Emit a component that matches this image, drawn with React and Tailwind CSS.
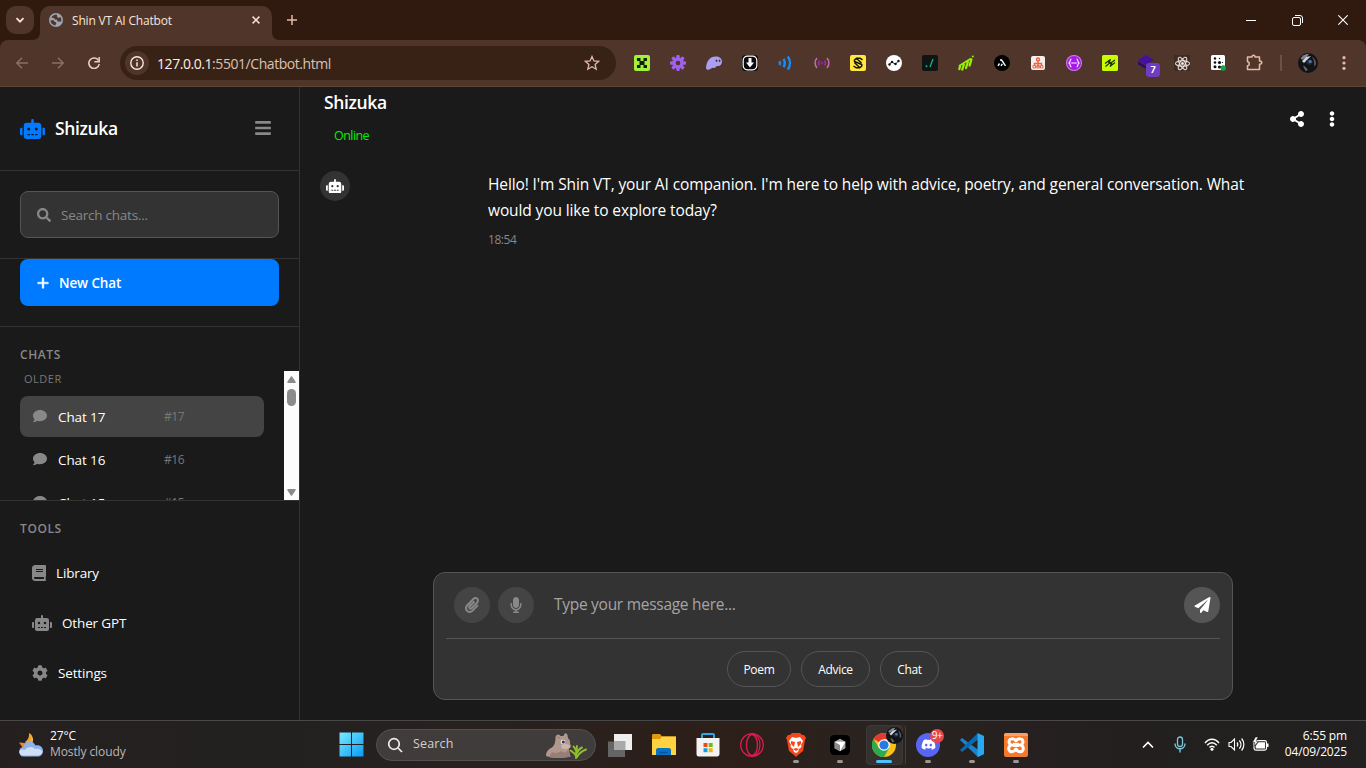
import React from "react";
import { FaPlus } from "react-icons/fa6";
import {
  FaReact, FaDiscord, FaRobot, FaBars, FaSearch, FaComment, FaBook, FaCog,
  FaPaperclip, FaMicrophone, FaPaperPlane, FaShareAlt, FaEllipsisV,
} from "react-icons/fa";

const S = ({ w = 24, h, vb = "0 0 24 24", className = "", children }) => (
  <svg width={w} height={h || w} viewBox={vb} fill="none" className={"shrink-0 " + className}>{children}</svg>
);

function TabStrip() {
  return (
    <div className="flex h-10 bg-[#301a10]">
      <div className="flex w-8 pl-1.5 pt-1.5">
        <div className="flex h-7 w-7 shrink-0 items-center justify-center rounded-[10px] bg-[#50362a]">
          <S w={10} vb="0 0 10 10"><path d="M1.5 3.2 5 6.7l3.5-3.5" stroke="#f6e3da" strokeWidth="1.8" /></S>
        </div>
      </div>
      <S w={8} vb="0 0 8 8" className="self-end"><path d="M8 0v8H0C5 8 8 5 8 0Z" fill="#50362a" /></S>
      <div className="flex h-[34px] w-[232px] items-center self-end rounded-t-[10px] bg-[#50362a] pb-[6px] pl-[9px] pr-[12px]">
        <S w={14} vb="0 0 14 14">
          <circle cx="7" cy="7" r="7" fill="#9aa5b1" />
          <path d="M7.600 1.600C5 1.800 3.200 2.800 2.400 4.600l2 .3c1.200.2 1 1.500 2.200 1.700 1.200.2 1.600-.1 1.700 1.100.1 1 1.200.8 2.300.8h1.600c.4-1.500.1-3.300-.9-4.500-.8.2-1.200.9-2.200.7C7.700 4.400 8.500 3 7.600 1.600Z" fill="#50362a" />
          <path d="M1.500 7.200c0 2.600 2 4.800 4.600 5.200.9-.3.400-1.500 1.100-2 .5-.5-.2-1.400-1-1.500-1.100-.1-.9-1.600-2-1.700Z" fill="#50362a" />
        </S>
        <span className="ml-[9px] mt-px flex-1 whitespace-nowrap text-[12px] tracking-[-0.18px] text-[#f6e3da]">Shin VT AI Chatbot</span>
        <S w={8} vb="0 0 8 8"><path d="m.6.6 6.800 6.800M7.400.6.6 7.400" stroke="#f6e3da" strokeWidth="1.500" /></S>
      </div>
      <S w={8} vb="0 0 8 8" className="self-end"><path d="M0 0v8h8C3 8 0 5 0 0Z" fill="#50362a" /></S>
      <div className="flex w-6 items-center justify-center">
        <S w={10} vb="0 0 10 10"><path d="M5 0v10M0 5h10" stroke="#e8b9a5" strokeWidth="1.500" /></S>
      </div>
      <div className="ml-auto flex items-center">
        <div className="flex w-[46px] justify-center"><div className="h-px w-2.5 bg-white" /></div>
        <div className="flex w-[46px] justify-center">
          <S w={11} vb="0 0 11 11" className="text-white">
            <rect x=".5" y="2.500" width="8" height="8" rx="1.500" stroke="currentColor" />
            <path d="M3 .5h5A2.500 2.500 0 0 1 10.500 3v5" stroke="currentColor" />
          </S>
        </div>
        <div className="flex w-[46px] justify-center">
          <S w={10} vb="0 0 10 10"><path d="m.3.3 9.400 9.400M9.700.3.3 9.700" stroke="#fff" strokeWidth="1.100" /></S>
        </div>
      </div>
    </div>
  );
}

const extensions = [
  <S w={16} vb="0 0 16 16"><rect width="16" height="16" rx="2" fill="#a3f03a" /><path d="M3 3h3.500v3H3zM9.500 3H13v3H9.500zM5.500 6h5v4h-5zM3 10h3.500v3H3zM9.500 10H13v3H9.500z" fill="#10200a" /></S>,
  <S w={16}><g fill="#a061ee">{[0, 45, 90, 135].map((a) => <rect key={a} x="9.500" y="0" width="5" height="24" rx="1.500" transform={`rotate(${a} 12 12)`} />)}<circle cx="12" cy="12" r="8.500" /></g><circle cx="12" cy="12" r="3.500" fill="#50362a" /></S>,
  <S w={16} vb="0 0 16 16"><path d="M0 13C.5 6 4 1.500 9.500 1.500c4 0 6.500 2 6.500 5 0 3-2 5-4.500 4.500-1.500 0-2 2.500-4 2-1.500-.5-2 .5-3.500 1.300C2.500 15 0 15 0 13Z" fill="#ab9ff2" /><ellipse cx="10.500" cy="5.800" rx=".9" ry="1.200" fill="#50362a" /><ellipse cx="13.600" cy="5.800" rx=".9" ry="1.200" fill="#50362a" /></S>,
  <S w={16} vb="0 0 16 16"><rect width="16" height="16" rx="3.500" fill="#0b0b0b" /><rect x="1.200" y="1.200" width="13.600" height="13.600" rx="4" stroke="#fff" strokeWidth="1.200" /><path d="M6.500 3h3v4.500H12l-4 5-4-5h2.500Z" fill="#fff" /></S>,
  <S w={16} vb="0 0 16 16"><path d="M1.500 6a4 4 0 0 1 0 4M5.500 3.800a8 8 0 0 1 0 8.400M9.800 1.500a11 11 0 0 1 0 13" stroke="#188af2" strokeWidth="2.500" /></S>,
  <S w={16} vb="0 0 16 16"><circle cx="8" cy="8" r="1.400" fill="#8d2294" /><path d="M5.500 5.500a4 4 0 0 0 0 5M10.500 5.500a4 4 0 0 1 0 5" stroke="#a129a7" strokeWidth="1.400" /><path d="M3 3a7.500 7.500 0 0 0 0 10M13 3a7.500 7.500 0 0 1 0 10" stroke="#c66bb3" strokeWidth="1.500" /></S>,
  <S w={16} vb="0 0 16 16"><rect width="16" height="16" rx="2" fill="#ffe93d" /><path d="M12.500 4.800 10 3.200H6.500L4.500 5v1.500l7.300 3V11l-2 1.800H6.200L3.500 11M6.500 3.500l5 4.500M4.500 7.500l5 5" stroke="#16130a" strokeWidth="1.500" /></S>,
  <S w={16} vb="0 0 16 16"><circle cx="8" cy="8" r="8" fill="#fff" /><path d="m3.500 9.500 2-2.500 4 2 3-3" stroke="#111" strokeWidth=".9" /><g fill="#111"><circle cx="3.500" cy="9.500" r="1.200" /><circle cx="6" cy="7" r="1.200" /><circle cx="9.500" cy="9" r="1.200" /><circle cx="12.500" cy="6" r="1.200" /></g></S>,
  <S w={16} vb="0 0 16 16"><rect width="16" height="16" rx="2" fill="#111413" /><circle cx="4.500" cy="11.300" r="1" fill="#10b981" /><path d="m8 12 3-8" stroke="#10b981" strokeWidth="1.300" /></S>,
  <S w={16} vb="0 0 16 16"><g stroke="#98ee0b" strokeLinecap="round" strokeWidth="2.300"><path d="m1.300 14 .7-2.500M4.300 14.500l1.500-5M8 13l1.800-6M11.600 10.500l1.800-6" /></g><path d="m1 11 12-7.500" stroke="#98ee0b" strokeWidth="1.800" /><circle cx="14.800" cy="1.400" r="1" fill="#98ee0b" /></S>,
  <S w={16} vb="0 0 16 16"><circle cx="8" cy="8" r="8" fill="#000" /><path d="m4 10.800 1.500-2.300M6 5h1.600l3.900 5.800M7 10.800l1.300-2" stroke="#fff" strokeWidth="1.400" /></S>,
  <S w={14} vb="0 0 14 14"><rect width="14" height="14" rx="2" fill="#f3efed" /><circle cx="7" cy="3.500" r="1.500" stroke="#ef6147" strokeWidth="1.500" /><path d="M7 5v6M3.500 10V7.500h7V10" stroke="#ef6147" strokeWidth="1.400" /><path d="M2 9.500h2.500V12H2zM5.800 9.500h2.500V12H5.800zM9.500 9.500H12V12H9.500z" stroke="#ef6147" /></S>,
  <S w={16} vb="0 0 16 16"><circle cx="8" cy="8" r="8" fill="#d77cf7" /><circle cx="8" cy="8" r="7" fill="#a51ae9" /><path d="M5.500 4C3.500 4 5 7 3 8c2 1 .5 4 2.500 4M10.500 4c2 0 .5 3 2.500 4-2 1-.5 4-2.500 4" stroke="#fff" strokeWidth="1.100" /><path d="M5.500 8h5" stroke="#fff" strokeWidth="1.400" strokeDasharray="1.200 .7" /></S>,
  <S w={16} vb="0 0 16 16"><rect width="16" height="16" rx="1.500" fill="#c6ff00" /><path d="m3 8.500 5.500-4-1.500 3h2.500l3.500-2.500M3.500 11.500 7 8.500h2.500L8 11.500 13 7.500" stroke="#222b05" strokeWidth="1.200" /></S>,
  <div className="relative h-4 w-4"><S w={16} vb="0 0 16 16"><path d="m8 0 8 5-8 5-8-5Z" fill="#4310a2" /><path d="m0 6 8 5v3L0 9.500Z" fill="#2b0c6e" /></S><span className="absolute left-2 top-2 flex h-[14px] w-[14px] items-center justify-center rounded-[3px] bg-[#6f3cc3] font-['Inter'] text-[9px] font-bold text-white">7</span></div>,
  <div className="flex h-4 w-4 items-center justify-center bg-[#3e2b22] text-[#f4ece8]"><FaReact size={15} stroke="currentColor" strokeWidth="14" /></div>,
  <S w={16} vb="0 0 16 16"><rect x="1" width="14" height="15" rx="1.500" fill="#fff" /><g fill="#111"><circle cx="5" cy="3.500" r="1.200" /><circle cx="5" cy="7.500" r="1.300" /><circle cx="5" cy="11.800" r="1.500" /><circle cx="9.500" cy="7.500" r="1.600" /><circle cx="9.500" cy="3.500" r=".7" /><circle cx="9.500" cy="12" r="1.600" /><circle cx="12.500" cy="7.500" r=".6" /></g><circle cx="13.200" cy="13" r="2.700" fill="#13a34a" /></S>,
  <S w={17} vb="0 0 17 17" className="-mt-0.5"><path d="M1.500 3H6c0-2.500 3-2.500 3 0h4.500v4c3 0 3 3.200 0 3.200V15.500h-12v-3.700c2.300 0 2.300-4 0-4Z" stroke="#e8b9a5" strokeWidth="1.500" strokeLinejoin="round" /></S>,
];

function Avatar({ size }) {
  return (
    <S w={size} vb="0 0 20 20">
      <circle cx="10" cy="10" r="10" fill="#111317" />
      <path d="M2.500 5.500C4 3 7 .8 11 .8l-2 3-5 3Z" fill="#7c8894" />
      <path d="m4 8 4-4 5-1-3 3-4 4Z" fill="#d2d4d6" />
      <path d="m8 7.500 5-1 2 3-3 2.500-3-1Z" fill="#232c3b" />
      <circle cx="12.200" cy="8.500" r="1.500" fill="#4f7da5" />
      <path d="M14 3.500c3 2 4.500 5 4 8l-2 2c.5-4 0-6-2-10Z" fill="#59585c" />
      <path d="m5 13 2 .5 3 3.500-2.500 1Z" fill="#66686e" />
    </S>
  );
}

function Toolbar() {
  return (
    <div className="bg-[#301a10]">
      <div className="flex h-[46px] items-center rounded-t-[8px] bg-[#50362a]">
        <div className="flex w-[120px] shrink-0 items-center pl-4">
          <S w={12} vb="0 0 12 12"><path d="M12 6H1M6 .8.8 6 6 11.200" stroke="#8c6f62" strokeWidth="1.500" /></S>
          <S w={12} vb="0 0 12 12" className="ml-6"><path d="M0 6h11M6 .8 11.200 6 6 11.200" stroke="#8c6f62" strokeWidth="1.500" /></S>
          <S w={12} vb="0 0 12 12" className="ml-6"><path d="M10.500 3.500A5.200 5.200 0 1 0 11.200 7" stroke="#f2cbb9" strokeWidth="1.600" /><path d="M11.200 0v4.800H6.400" stroke="#f2cbb9" strokeWidth="1.500" /></S>
        </div>
        <div className="flex h-[34px] w-[496px] shrink-0 items-center rounded-full bg-[#382215] pl-[5px] pr-4">
          <div className="flex h-6 w-6 items-center justify-center rounded-full bg-[#50362a]">
            <S w={14} vb="0 0 14 14"><circle cx="7" cy="7" r="6.200" stroke="#f8e8e0" strokeWidth="1.400" /><path d="M7 6.200v4.300M7 3.400v1.500" stroke="#f8e8e0" strokeWidth="1.500" /></S>
          </div>
          <span className="ml-[8px] flex-1 whitespace-nowrap text-[14px] tracking-[-0.44px] text-[#d9c3b6]"><span className="text-[#fff0e8]">127.0.0.1</span>:5501/Chatbot.html</span>
          <S w={16} vb="0 0 16 16"><path d="m8 1.500 1.900 4.400 4.800.4-3.600 3.200 1.100 4.700L8 11.700l-4.200 2.500 1.100-4.700-3.600-3.200 4.800-.4Z" stroke="#e0bbaa" strokeWidth="1.300" /></S>
        </div>
        <div className="ml-2 flex">
          {extensions.map((e, i) => <div key={i} className="flex h-5 w-9 shrink-0 items-center justify-center">{e}</div>)}
        </div>
        <div className="ml-2 h-4 w-[2px] bg-[#70503f]" />
        <div className="ml-4"><Avatar size={20} /></div>
        <S w={4} h={14} vb="0 0 4 14" className="ml-6"><g fill="#e8b9a5"><circle cx="2" cy="1.700" r="1.600" /><circle cx="2" cy="7" r="1.600" /><circle cx="2" cy="12.300" r="1.600" /></g></S>
      </div>
      <div className="h-px bg-[#5a453b]" />
    </div>
  );
}

function ChatRow({ n, active }) {
  return (
    <div className={"mb-0.5 flex h-[41px] shrink-0 items-center rounded-[8px] pl-[13px] " + (active ? "bg-[#444]" : "")}>
      <FaComment className="-mt-0.5 h-[14px] w-[14px] text-[#888]" />
      <span className="ml-[11px] mt-0.5 w-[106px] whitespace-nowrap text-[13.500px] tracking-[-0.1px] text-white">Chat {n}</span>
      <span className="text-[12px] tracking-[-0.4px] text-[#777]">#{n}</span>
    </div>
  );
}

function Sidebar() {
  return (
    <aside className="flex w-[300px] shrink-0 flex-col border-r border-[#333]">
      <div className="flex h-[84px] items-center border-b border-[#333] pl-5 pr-[28px]">
        <FaRobot className="h-5 w-[25px] text-[#007bff]" />
        <span className="ml-[10px] flex-1 text-[17.500px] font-semibold tracking-[-0.35px] text-white">Shizuka</span>
        <FaBars className="-mt-0.5 h-[18px] w-4 text-[#888]" />
      </div>
      <div className="h-[88px] border-b border-[#333] px-5 pt-5">
        <div className="flex h-[47px] items-center rounded-[8px] border border-[#555] bg-[#333] pl-4">
          <FaSearch className="h-[14px] w-[14px] text-[#888]" />
          <span className="ml-[10px] mt-0.5 text-[13.500px] tracking-[-0.24px] text-[#888]">Search chats...</span>
        </div>
      </div>
      <div className="h-[68px] border-b border-[#333] px-5">
        <div className="flex h-[47px] items-center rounded-[8px] bg-[#007bff] pl-[17px] text-white">
          <FaPlus className="h-[14px] w-[12px]" stroke="currentColor" strokeWidth="16" />
          <span className="ml-[10px] mt-0.5 text-[13.500px] font-semibold tracking-[-0.12px]">New Chat</span>
        </div>
      </div>
      <div className="flex h-[174px] flex-col border-b border-[#333] pt-5">
        <div className="h-6 pl-5 text-[12px] font-semibold leading-[15px] tracking-[0.6px] text-[#888]">CHATS</div>
        <div className="flex h-[129px] overflow-hidden">
          <div className="flex w-[264px] flex-col overflow-hidden pl-5">
            <div className="h-[25px] shrink-0 pl-1 text-[11px] leading-4 tracking-[0.5px] text-[#777]">OLDER</div>
            <ChatRow n={17} active />
            <ChatRow n={16} />
            <ChatRow n={15} />
          </div>
          <div className="ml-5 flex w-[15px] flex-col items-center bg-[#fcfcfc] pb-1 pt-[5px]">
            <S w={9} h={7} vb="0 0 9 7"><path d="M4.500 1 8 6.200H1Z" fill="#8b8b8b" stroke="#8b8b8b" strokeWidth="1.500" strokeLinejoin="round" /></S>
            <div className="mt-1.5 h-[17px] w-[9px] rounded-full bg-[#8b8b8b]" />
            <S w={9} h={7} vb="0 0 9 7" className="mt-auto"><path d="M4.500 6 8 .8H1Z" fill="#8b8b8b" stroke="#8b8b8b" strokeWidth="1.500" strokeLinejoin="round" /></S>
          </div>
        </div>
      </div>
      <div className="pl-5 pt-5">
        <div className="h-[27px] text-[12px] font-semibold leading-[15px] tracking-[0.6px] text-[#888]">TOOLS</div>
        {[[FaBook, "h-4 w-[14px]", "Library"], [FaRobot, "h-4 w-5", "Other GPT"], [FaCog, "h-4 w-4", "Settings"]].map(([Icon, size, label]) => (
          <div key={label} className="flex h-[50px] items-center pl-3">
            <Icon className={size + " text-[#888]"} />
            <span className="ml-[10px] text-[13.500px] tracking-[-0.15px] text-white">{label}</span>
          </div>
        ))}
      </div>
    </aside>
  );
}

function Chat() {
  return (
    <main className="flex flex-1 flex-col">
      <header className="flex h-[73px] justify-between pl-6 pr-[29px]">
        <div>
          <div className="mt-[3px] text-[17.500px] font-semibold leading-6 tracking-[-0.35px] text-white">Shizuka</div>
          <div className="ml-2.5 mt-[12px] text-[12.500px] leading-5 tracking-[-0.55px] text-[#00f000]">Online</div>
        </div>
        <div className="flex h-16 items-center gap-[22px] text-white">
          <FaShareAlt className="mr-px h-4 w-[14px]" />
          <FaEllipsisV className="h-4 w-[10px]" />
        </div>
      </header>
      <div className="flex flex-1 pl-5 pt-[11px]">
        <div className="flex h-[30px] w-[30px] items-center justify-center rounded-full bg-[#333]"><FaRobot className="h-[14.400px] w-[18px] text-white" /></div>
        <div className="ml-[138px] whitespace-nowrap text-[15.500px] leading-[26px] tracking-[-0.116px] text-white">
          <div>Hello! I'm Shin VT, your AI companion. I'm here to help with advice, poetry, and general conversation. What</div>
          <div>would you like to explore today?</div>
          <div className="mt-[7px] text-[12px] leading-5 tracking-[-0.45px] text-[#888]">18:54</div>
        </div>
      </div>
      <div className="mb-5 ml-[133px] h-[128px] w-[800px] rounded-[12px] border border-[#555] bg-[#333] px-3 pt-3">
        <div className="flex h-[54px] border-b border-[#555] pl-2 pt-0.5">
          <div className="flex h-9 w-9 items-center justify-center rounded-full bg-[#444]"><FaPaperclip className="h-4 w-[14px] text-[#888]" /></div>
          <div className="ml-2 flex h-9 w-9 items-center justify-center rounded-full bg-[#444]"><FaMicrophone className="h-4 w-3 text-[#888]" /></div>
          <span className="ml-5 flex h-9 flex-1 items-center text-[15.500px] tracking-[-0.28px] text-[#a5a5a5]">Type your message here...</span>
          <div className="flex h-9 w-9 items-center justify-center rounded-full bg-[#555]"><FaPaperPlane className="h-4 w-[17px] text-white" /></div>
        </div>
        <div className="flex justify-center gap-2.5 pt-3">
          {[["Poem", "w-[64px]"], ["Advice", "w-[69px]"], ["Chat", "w-[59px]"]].map(([t, w]) => (
            <div key={t} className={"flex h-9 items-center justify-center rounded-full border border-[#555] pt-0.5 text-[12px] font-medium tracking-[-0.3px] text-white " + w}>{t}</div>
          ))}
        </div>
      </div>
    </main>
  );
}

const apps = [
  <S w={24}><path d="M0 8.500h17V24H0Z" fill="#656565" /><path d="M6 1h18v16H6z" fill="#eee" /><path d="M6 8h11.500v9H6z" fill="#a9a9a9" /></S>,
  <S w={24}><path d="M0 2.500C0 1.500.5 1 1.500 1H8l2 2.500H23c.5 0 1 .5 1 1V8H0Z" fill="#e39a08" /><path d="M0 6h8l2-2.500h14V22H0Z" fill="#ffd23f" /><path d="M4 22v-5c0-1 .8-2 2-2h11c1.200 0 2 1 2 2v5Z" fill="#0873c4" /><path d="M7.500 19.500h8" stroke="#07549a" strokeWidth="1.500" /></S>,
  <S w={24}><path d="M6 6V2c0-.8.500-1 1-1h10c.6 0 1 .2 1 1v4" stroke="#29a9ec" strokeWidth="2" /><path d="M.5 5h23v16c0 1.500-1 2.500-2.500 2.500H3A2.500 2.500 0 0 1 .5 21Z" fill="#f3f3f3" /><path d="M7.500 10h4v4h-4z" fill="#e64b1d" /><path d="M12.700 10h4v4h-4z" fill="#79b716" /><path d="M7.500 15.200h4v4h-4z" fill="#129edc" /><path d="M12.700 15.200h4v4h-4z" fill="#f6b20e" /></S>,
  <S w={24}><circle cx="12" cy="12" r="11.300" stroke="#e11b50" strokeWidth="1.300" /><ellipse cx="12" cy="12" rx="5.500" ry="10.500" stroke="#e11b50" strokeWidth="1.300" /><path d="M12 1c5 0 8 5 8 11s-3 11-8 11" stroke="#e11b50" strokeWidth="1.200" /></S>,
  <S w={24}><path d="m8 0-2 2H4L2 5l1 2 2 11 5 4 2 2 2-2 5-4 2-11 1-2-2-3h-2l-2-2Z" fill="#f5471b" /><path d="m8 4 4 1 4-1 3 4-2 4 .5 2-2.500 2-1 3-2 1-2-1-1-3-2.500-2 .5-2-2-4Z" fill="#fff" /><path d="m7 8 4 1-1 5-3-3ZM17 8l-4 1 1 5 3-3ZM9 16l3-1 3 1-3 2Z" fill="#f5471b" /></S>,
  <S w={20}><rect width="24" height="24" rx="5" fill="#000" /><path d="m12 4.500 6.500 3.700v7.600L12 19.500l-6.500-3.700V8.200Z" fill="#a5a5a5" /><path d="m5.500 8.200 6.500 3.700v7.600l-6.500-3.700Z" fill="#8b8b8b" /><path d="M5.500 8.200h13L12 19.500v-7.600Z" fill="#fff" /></S>,
  null,
  <div className="relative"><div className="flex h-6 w-6 items-center justify-center rounded-full bg-[#5865f2]"><FaDiscord size={15} className="text-white" /></div><span className="absolute -top-1 left-[14px] flex h-[14px] w-[14px] items-center justify-center rounded-full bg-[#e4484e] text-[10px] tracking-[-0.5px] text-white">9+</span></div>,
  <S w={24}><path d="m0 7 2-2 22 16-6 3Z" fill="#1684cf" /><path d="m0 17 2 2L20 5 18 0Z" fill="#0968ae" /><path d="m17.500 0 6.500 3v18l-6.500 3Z" fill="#29a8ef" /></S>,
  <S w={24}><rect width="24" height="24" rx="2" fill="#f5792b" /><path d="M0 2c0-1 1-2 2-2h20c1 0 2 1 2 2v1H0Z" fill="#f5a169" /><path d="M12 8C10 5 5 5 5 9c0 2 2 3 3 3-2 0-4 2-3 5 1 2.500 5 2.500 7-1 2 3.500 6 3.500 7 1 1-3-1-5-3-5 1 0 3-1 3-3 0-4-5-4-7-1Z" stroke="#fff" strokeWidth="3" strokeLinejoin="round" /><path d="M9 12h6" stroke="#fff" strokeWidth="4" /></S>,
];

function ChromeApp() {
  return (
    <div className="relative flex h-10 w-[37px] items-center justify-center rounded-[4px] border border-[#3c3937] bg-[#35312f]">
      <S w={24}>
        <circle cx="12" cy="12" r="12" fill="#fbc116" />
        <path d="M12 12 1.600 6A12 12 0 0 1 22.400 6H12Z" fill="#e33b2e" />
        <path d="M1.600 6A12 12 0 0 0 12 24l5.200-9L12 12 6.800 15Z" fill="#2da94f" />
        <circle cx="12" cy="12" r="5.800" fill="#fff" /><circle cx="12" cy="12" r="4.600" fill="#2878e6" />
      </S>
      <div className="absolute -top-px left-5 h-10 w-[19px] rounded-r-[4px] border-r border-[#45403e]" />
      <div className="absolute left-[19px] top-[1px]"><Avatar size={17} /></div>
    </div>
  );
}

function Taskbar() {
  return (
    <footer className="flex h-12 items-center border-t border-[#484848] bg-[linear-gradient(90deg,#25201f_0%,#222120_20%,#272120_32%,#2d1f19_53%,#292320_65%,#231f1f_82%,#222020_100%)] text-white">
      <div className="flex w-[339px] shrink-0 items-center pl-[18px]">
        <S w={26} h={26} vb="0 0 26 26">
          <path d="M1 10.500 7 11l3 3-4 3-2.500-3Z" fill="#f0861c" />
          <path d="M11 1c3.500 2 5 6 3.500 10l-6 1C11 9 12 5 11 1Z" fill="#f6b53b" /><path d="M11 1c.5 4-1 7-4 9l2 3 4-3c1-3 0-6-2-9Z" fill="#eca52c" />
          <path d="M5.500 24.500a4.800 4.800 0 0 1-.3-9.500C7 8 15 8 17.500 13.500c4.500-1 7.500 1.800 7.500 5.500 0 3.500-2.500 5.500-5.500 5.500Z" fill="#8fb1ec" />
          <path d="M5.500 23.500C2.500 23.500 1 21 1.500 19c1.500-2 4-1.500 5.500-1 2.500-4 8-3.500 10-1 3-1 6 .5 7.500 2.500-.5 2.500-2.500 4-5 4Z" fill="#cfdff8" />
        </S>
        <div className="-mt-px ml-1.5 whitespace-nowrap text-[12px] leading-4 tracking-[-0.1px]"><div>27°C</div><div className="text-[#b9b7b6]">Mostly cloudy</div></div>
      </div>
      <S w={25} vb="0 0 24 24"><defs><linearGradient id="win" x1="0" y1="0" x2="1" y2="1"><stop stopColor="#79ebff" /><stop offset="1" stopColor="#079bf5" /></linearGradient></defs><path d="M.5.5h11v11H.5zM12.500.5h11v11h-11zM.5 12.500h11v11H.5zM12.500 12.500h11v11h-11z" fill="url(#win)" /></S>
      <div className="ml-3 flex h-8 w-[220px] shrink-0 items-center rounded-full border border-[#535150] bg-[#403c3b] pl-2.5">
        <S w={16} vb="0 0 16 16"><circle cx="7" cy="7" r="5.300" stroke="#eee" strokeWidth="1.700" /><path d="m11 11 4 4" stroke="#eee" strokeWidth="1.700" /></S>
        <span className="ml-2.5 flex-1 text-[12.500px] tracking-[0.15px] text-[#d2d0cf]">Search</span>
        <S w={44} h={28} vb="0 0 44 28" className="mr-[6px]">
          <path d="M1 25c0-5 3-7 6-8.500C10 14 10 11 10.500 8c-.5-2 .5-4 2-4.500 2 0 2.500 1 3 1.500h3c.5-2 2-3.500 3-2.500 1.500 1 1 3.500 1.500 4.500 2 2 2.500 4 2 6 1.500 1.500 1 4-1.500 4.500l2 8C17 27.500 7 27.500 1 25Z" fill="#b1988f" />
          <path d="M7 21c3 2 6 1 9-1 2 2 5 2 7-1l2.500 6.500C18 27.500 8 27.500 4 26Z" fill="#977e76" /><ellipse cx="20.500" cy="15.500" rx="4.500" ry="2.500" fill="#ccb6ac" />
          <circle cx="18" cy="11" r="2.300" fill="#eee" /><circle cx="18.300" cy="11" r="1.500" fill="#283449" /><path d="M12.500 6c1 0 1.500.5 1.500 1.500" stroke="#846a63" />
          <path d="M31 27c0-5 .5-8 1-12M31 25c-1-3-3-4-5.500-5.500M32 26c2-4 5-6 9-7.500M32 22c1-3 2.500-4.500 5-5.500M31 20c-.5-2-1-3-2.500-4.500" stroke="#8fbe2c" strokeWidth="1.900" strokeLinecap="round" />
        </S>
      </div>
      <div className="ml-0.5 flex">
        {apps.map((a, i) => (
          <div key={i} className="relative flex h-[47px] w-11 items-center justify-center">
            {a || <ChromeApp />}
            {i > 3 && <div className={"absolute bottom-[5px] h-[3px] rounded-full " + (i === 6 ? "w-4 bg-[#4cc2ff]" : "w-1.5 bg-[#9c9795]")} />}
          </div>
        ))}
      </div>
      <div className="ml-auto flex items-center pr-[19px]">
        <S w={12} h={8} vb="0 0 12 8"><path d="m1 6.500 5-5 5 5" stroke="#fff" strokeWidth="1.600" /></S>
        <S w={12} h={17} vb="0 0 12 17" className="ml-5"><rect x="3.500" y="1" width="5" height="9.500" rx="2.500" stroke="#79c6dc" strokeWidth="1.300" /><path d="M1 7.500c0 7 10 7 10 0M6 13v3.500" stroke="#79c6dc" strokeWidth="1.400" /></S>
        <S w={16} h={13} vb="0 0 16 13" className="ml-[18px]"><path d="M1 5c4-5 10-5 14 0M3.200 7.300c3-3.500 6.600-3.500 9.600 0M5.500 9.500c1.500-1.700 3.500-1.700 5 0" stroke="#fff" strokeWidth="1.400" /><circle cx="8" cy="11.300" r="1.500" fill="#fff" /></S>
        <S w={17} h={15} vb="0 0 17 15" className="ml-2"><path d="M1 5.500h2l3.500-3.500v11L3 9.500H1Z" stroke="#fff" strokeWidth="1.100" /><path d="M9 5.500c1 1.200 1 2.800 0 4M11.300 3.500c2.200 2.500 2.200 5.500 0 8M13.600 1.500c3 3.500 3 8.500 0 12" stroke="#fff" strokeWidth="1.200" /></S>
        <S w={17} h={15} vb="0 0 17 15" className="ml-[7px]"><rect x="2" y="3.600" width="12.500" height="9.500" rx="1.800" stroke="#fff" strokeWidth="1.200" /><path d="M6.500 5.200h6.500v6.300H3.700V8.800ZM14.500 6.500h2v3.500h-2z" fill="#fff" /><path d="M3.500 0 .5 5.500H3L2 9.500l4.500-5.300H4L6 0Z" fill="#fff" stroke="#231f1f" strokeWidth=".5" /></S>
        <div className="-mt-px ml-[14px] w-[64px] whitespace-nowrap text-right text-[12px] leading-4 tracking-[-0.15px]"><div>6:55 pm</div><div>04/09/2025</div></div>
      </div>
    </footer>
  );
}

export default function App() {
  return (
    <div className="flex h-[768px] w-[1366px] flex-col overflow-hidden bg-[#1a1a1a] font-['Open_Sans','Noto_Sans',sans-serif]">
      <TabStrip />
      <Toolbar />
      <div className="flex h-[633px] shrink-0"><Sidebar /><Chat /></div>
      <Taskbar />
    </div>
  );
}
